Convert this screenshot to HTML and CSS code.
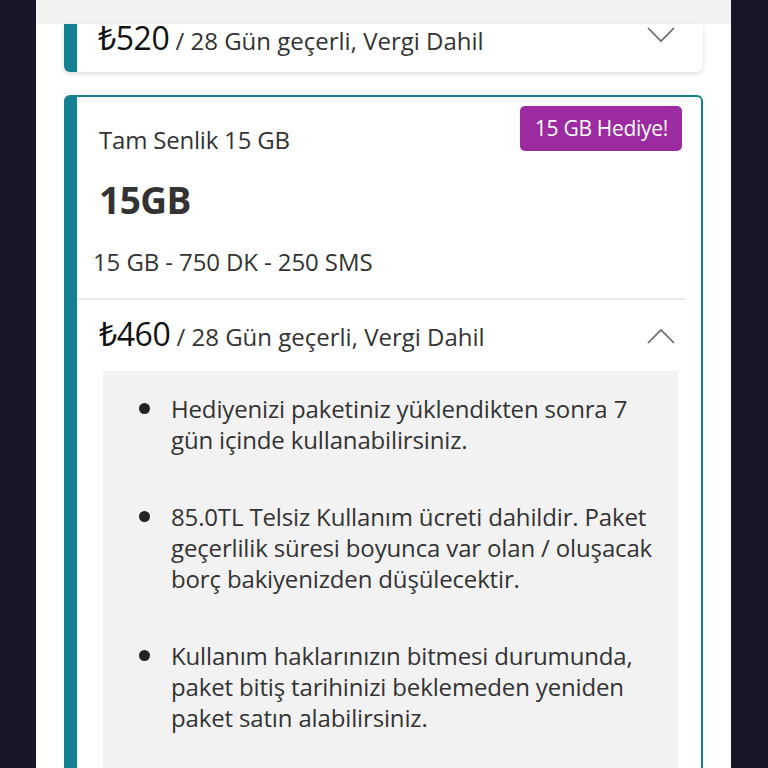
FILE: index.html
```html
<!DOCTYPE html>
<html lang="tr">
<head>
    <meta charset="UTF-8">
    <meta name="viewport" content="width=device-width, initial-scale=1.0">
    <link rel="stylesheet" href="styles.css">
    <title>Paketler</title>
</head>
<body>
    <div class="page">
        <div class="top-bar"></div>

        <div class="card card-closed">
            <div class="price-row">
                <p class="price"><span class="amount">₺520</span> / 28 Gün geçerli, Vergi Dahil</p>
                <svg class="chevron" width="28" height="16" viewBox="0 0 28 16">
                    <polyline points="1,1 14,14 27,1" fill="none" stroke="#666" stroke-width="1.6"/>
                </svg>
            </div>
        </div>

        <div class="card card-open">
            <div class="card-head">
                <div class="head-text">
                    <p class="plan-name">Tam Senlik 15 GB</p>
                    <p class="plan-size">15GB</p>
                </div>
                <span class="badge">15 GB Hediye!</span>
            </div>
            <p class="plan-details">15 GB - 750 DK - 250 SMS</p>
            <hr class="divider">
            <div class="price-row">
                <p class="price"><span class="amount">₺460</span> / 28 Gün geçerli, Vergi Dahil</p>
                <svg class="chevron" width="28" height="16" viewBox="0 0 28 16">
                    <polyline points="1,15 14,2 27,15" fill="none" stroke="#666" stroke-width="1.6"/>
                </svg>
            </div>
            <div class="info-box">
                <div class="info-item">
                    <span class="dot"></span>
                    <p>Hediyenizi paketiniz yüklendikten sonra 7 gün içinde kullanabilirsiniz.</p>
                </div>
                <div class="info-item">
                    <span class="dot"></span>
                    <p>85.0TL Telsiz Kullanım ücreti dahildir. Paket geçerlilik süresi boyunca var olan / oluşacak borç bakiyenizden düşülecektir.</p>
                </div>
                <div class="info-item">
                    <span class="dot"></span>
                    <p>Kullanım haklarınızın bitmesi durumunda, paket bitiş tarihinizi beklemeden yeniden paket satın alabilirsiniz.</p>
                </div>
            </div>
        </div>
    </div>
</body>
</html>
```

FILE: styles.css
```css
body {
    margin: 0;
    padding: 0;
    background-color: #161628;
    font-family: "Open Sans", "Noto Sans", sans-serif;
    color: #333;
    height: 768px;
    overflow: hidden;
    display: flex;
    justify-content: center;
}

p {
    margin: 0;
}

.page {
    width: 695px;
    margin-left: -1px;
    background-color: #fff;
    height: 768px;
}

.top-bar {
    height: 24px;
    background-color: #f2f2f2;
}

.card {
    margin: 0 28px 0 28px;
    background-color: #fff;
    border-left: 13px solid #138192;
}

.card-closed {
    height: 48px;
    border-radius: 0 0 6px 6px;
    box-shadow: 0 2px 5px rgba(0, 0, 0, 0.14);
}

.card-closed .price-row {
    height: 30px;
    padding: 0 28px 0 21px;
}

.card-closed .chevron {
    margin-top: -8px;
}

.card-open {
    margin-top: 23px;
    border: 2px solid #138192;
    border-left-width: 13px;
    border-radius: 6px;
    height: 700px;
}

.card-head {
    display: flex;
    justify-content: space-between;
    align-items: flex-start;
    padding: 9px 19px 0 22px;
}

.head-text {
    padding-top: 19px;
}

.plan-name {
    font-size: 24px;
    line-height: 30px;
    letter-spacing: -0.2px;
}

.plan-size {
    margin-top: 23px;
    font-size: 37px;
    font-weight: bold;
    line-height: 44px;
    letter-spacing: -0.5px;
}

.badge {
    background-color: #9c2aa0;
    color: #fff;
    font-size: 21px;
    line-height: 45px;
    padding: 0 14px 0 15px;
    border-radius: 5px;
    letter-spacing: -0.3px;
}

.plan-details {
    padding: 25px 0 0 16px;
    font-size: 24px;
    line-height: 30px;
    letter-spacing: -0.1px;
}

.divider {
    border: none;
    border-top: 2px solid #e8e8e8;
    margin: 21px 15px 0 1px;
}

.price-row {
    display: flex;
    justify-content: space-between;
    align-items: center;
    padding: 16px 26px 0 22px;
}

.price {
    font-size: 24px;
    line-height: 36px;
    color: #333;
}

.amount {
    font-size: 32px;
    color: #111;
    letter-spacing: -0.5px;
}

.info-box {
    margin: 16px 23px 0 26px;
    background-color: #f2f2f2;
    padding: 22px 17px 0 36px;
    height: 400px;
}

.info-item {
    display: flex;
    align-items: flex-start;
    gap: 21px;
    margin-bottom: 46px;
}

.info-item p {
    font-size: 24px;
    line-height: 31px;
    letter-spacing: -0.15px;
    color: #333;
}

.dot {
    flex: none;
    width: 11px;
    height: 11px;
    margin-top: 10px;
    border-radius: 50%;
    background-color: #222;
}
```
